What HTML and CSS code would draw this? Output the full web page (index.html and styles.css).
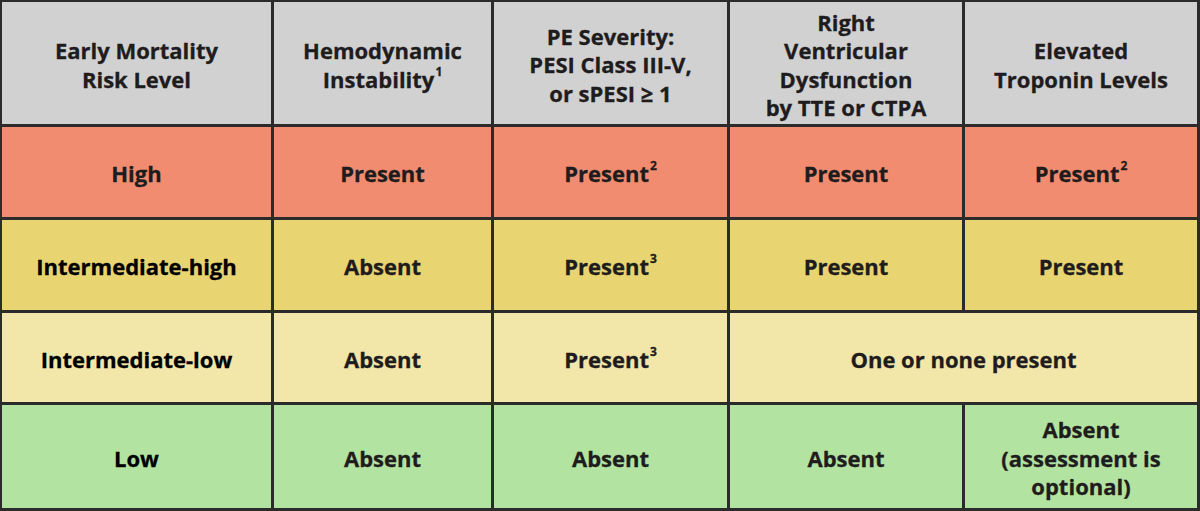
FILE: index.html
```html
<!DOCTYPE html>
<html>
<head>
<meta charset="utf-8">
<link rel="stylesheet" href="styles.css">
</head>
<body>
<div class="grid">
  <div class="cell head"><span class="txt">Early Mortality<br>Risk Level</span></div>
  <div class="cell head"><span class="txt">Hemodynamic<br>Instability<sup>1</sup></span></div>
  <div class="cell head"><span class="txt">PE Severity:<br>PESI Class III-V,<br>or sPESI ≥ 1</span></div>
  <div class="cell head"><span class="txt">Right<br>Ventricular<br>Dysfunction<br>by TTE or CTPA</span></div>
  <div class="cell head"><span class="txt">Elevated<br>Troponin Levels</span></div>

  <div class="cell high"><span class="txt">High</span></div>
  <div class="cell high"><span class="txt">Present</span></div>
  <div class="cell high"><span class="txt">Present<sup>2</sup></span></div>
  <div class="cell high"><span class="txt">Present</span></div>
  <div class="cell high"><span class="txt">Present<sup>2</sup></span></div>

  <div class="cell ihigh label"><span class="txt">Intermediate-high</span></div>
  <div class="cell ihigh"><span class="txt">Absent</span></div>
  <div class="cell ihigh"><span class="txt">Present<sup>3</sup></span></div>
  <div class="cell ihigh"><span class="txt">Present</span></div>
  <div class="cell ihigh"><span class="txt">Present</span></div>

  <div class="cell ilow label"><span class="txt">Intermediate-low</span></div>
  <div class="cell ilow"><span class="txt">Absent</span></div>
  <div class="cell ilow"><span class="txt">Present<sup>3</sup></span></div>
  <div class="cell ilow span2"><span class="txt">One or none present</span></div>

  <div class="cell low label"><span class="txt">Low</span></div>
  <div class="cell low"><span class="txt">Absent</span></div>
  <div class="cell low"><span class="txt">Absent</span></div>
  <div class="cell low"><span class="txt">Absent</span></div>
  <div class="cell low"><span class="txt">Absent<br>(assessment is<br>optional)</span></div>
</div>
</body>
</html>
```

FILE: styles.css
```css
html, body {
  margin: 0;
  padding: 0;
  background: #ffffff;
}

.grid {
  width: 1200px;
  height: 511px;
  box-sizing: border-box;
  display: grid;
  grid-template-columns: 269px 217px 233px 232px 232px;
  grid-template-rows: 122px 90px 90px 89px 103px;
  gap: 3px;
  padding: 2px 3px 3px 2px;
  background: #2b2b2b;
  font-family: "Open Sans", "Noto Sans", sans-serif;
  font-weight: 700;
  font-size: 22px;
  line-height: 28.5px;
  color: #1f1c1d;
}

.cell {
  display: flex;
  align-items: center;
  justify-content: center;
  text-align: center;
  padding-top: 3px;
  box-sizing: border-box;
}

.txt {
  display: block;
  -webkit-text-stroke: 0.3px currentColor;
}

.head { background: #d1d1d1; }
.high { background: #f28c70; }
.ihigh { background: #e8d470; }
.ilow { background: #f2e6a8; }
.low { background: #b3e3a1; }

.label { color: #000000; }

.span2 { grid-column: span 2; }

sup {
  font-size: 12px;
  line-height: 0;
  vertical-align: 12px;
  margin-left: 1px;
}
```
